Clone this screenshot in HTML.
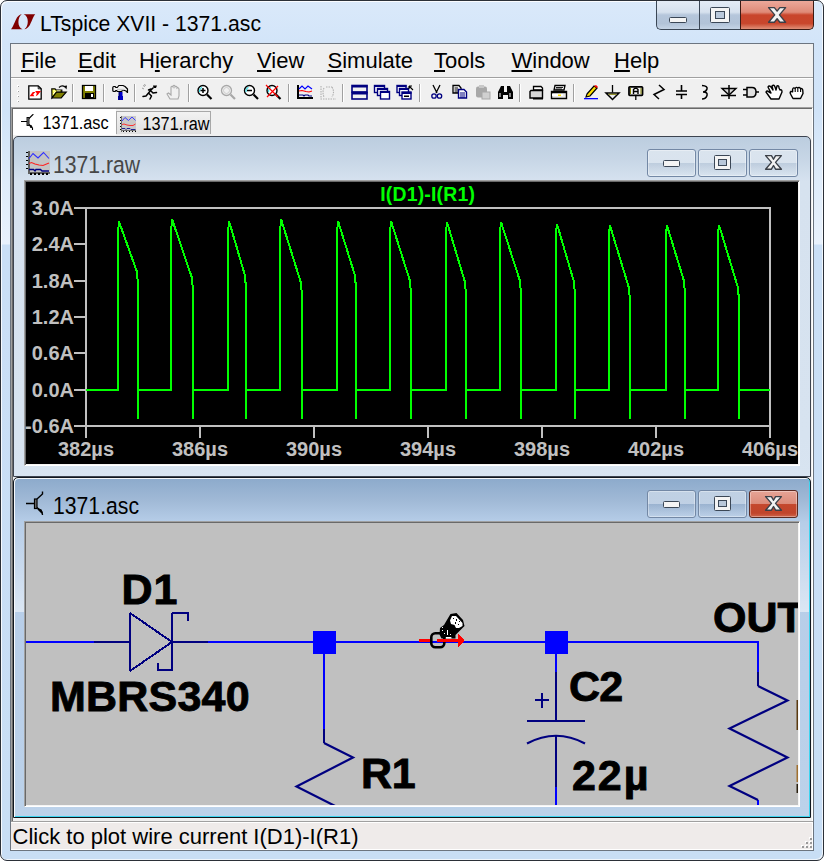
<!DOCTYPE html>
<html><head><meta charset="utf-8">
<style>
*{box-sizing:border-box;margin:0;padding:0}
html,body{width:824px;height:861px;overflow:hidden;background:#fff;font-family:"Liberation Sans",sans-serif}
.a{position:absolute}
#win{left:0;top:0;width:824px;height:861px;border:1px solid #2b3038;border-radius:7px;
 background:linear-gradient(180deg,#dae9fa 0px,#d3e5f9 40px,#d0e3f8 110px,#dfecfa 180px,#e8f1fc 243px,#cadff6 244px,#c8def5 861px);
 box-shadow:inset 1px 1px 0 rgba(255,255,255,.85),inset -1px -1px 0 rgba(255,255,255,.7)}
#ttl{left:40px;top:12px;font-size:21.2px;color:#000;white-space:nowrap;letter-spacing:0px}
.cb{top:1px;height:29px;border:1px solid #3b4756;border-top:none}
#client{left:10px;top:43px;width:804px;height:808px;border:1px solid #6c7580;background:#f0f0f0}
.menu{top:48px;font-size:22px;color:#000;white-space:nowrap}
.menu u{text-decoration:underline;text-underline-offset:2px;text-decoration-thickness:1.5px}
.sep{top:84px;width:1px;height:18px;background:#a0a0a0;box-shadow:1px 0 0 #fff}
.ico{top:84px;width:18px;height:18px}
.tabt{font-size:16.3px;transform:scaleY(1.08);transform-origin:0 50%;white-space:nowrap;color:#000}
.child{left:13px;width:798px;border:1px solid #3d4450;border-radius:5px 5px 0 0}
.cbtn{width:49px;height:28px;border:1px solid #7388a5;border-radius:3px;box-shadow:inset 0 0 0 1px rgba(255,255,255,.35);background:linear-gradient(180deg,rgba(255,255,255,.4),rgba(255,255,255,.3) 50%,rgba(0,20,60,.06) 51%,rgba(255,255,255,.15))}
.ctitle{font-size:21.2px;white-space:nowrap;color:#474747;transform:scaleY(1.13);transform-origin:0 50%}
</style></head><body>
<div id="win" class="a"></div>

<!-- logo -->
<svg class="a" style="left:0;top:0" width="40" height="40">
 <path d="M11,29.3 C13,27 15,21 17,17.5 C18.5,15.5 20,14.5 21.8,14.2 C19.8,15.3 18.4,18.5 18.4,22 C18.4,25.5 19.8,28.3 22.6,29.3 Z" fill="#800000"/>
 <path d="M35.2,14.2 C33.2,16.5 31.2,22.5 29.2,26 C27.7,28 26.2,29 24.4,29.3 C26.4,28.2 27.8,25 27.8,21.5 C27.8,18 26.4,15.2 23.6,14.2 Z" fill="#800000"/>
</svg>
<div id="ttl" class="a">LTspice XVII - 1371.asc</div>

<!-- caption buttons -->
<div class="a cb" style="left:656px;width:44px;border-radius:0 0 0 5px;border-right:none;background:linear-gradient(180deg,#e4ecf6 0,#d6e1ee 40%,#b5c6db 50%,#b2c3d8 80%,#c5d4e6 100%)"></div>
<div class="a cb" style="left:699px;width:42px;border-left:1px solid #3b4756;border-right:none;background:linear-gradient(180deg,#e4ecf6 0,#d6e1ee 40%,#b5c6db 50%,#b2c3d8 80%,#c5d4e6 100%)"></div>
<div class="a cb" style="left:740px;width:74px;border-radius:0 0 5px 0;border-color:#3a1a14;background:linear-gradient(180deg,#eca89a 0,#df8a78 40%,#c9452c 50%,#c8462c 80%,#e09078 100%)"></div>
<!--CAPGLYPHS-->

<div id="client" class="a"></div>

<!-- menu -->
<div class="a menu" style="left:21px"><u>F</u>ile</div>
<div class="a menu" style="left:78px"><u>E</u>dit</div>
<div class="a menu" style="left:139px">H<u>i</u>erarchy</div>
<div class="a menu" style="left:257px"><u>V</u>iew</div>
<div class="a menu" style="left:327.5px"><u>S</u>imulate</div>
<div class="a menu" style="left:434px"><u>T</u>ools</div>
<div class="a menu" style="left:511.5px"><u>W</u>indow</div>
<div class="a menu" style="left:614px"><u>H</u>elp</div>
<div class="a" style="left:11px;top:77px;width:802px;height:1px;background:#a0a0a0"></div>
<div class="a" style="left:11px;top:78px;width:802px;height:1px;background:#fff"></div>
<div class="a" style="left:11px;top:107px;width:802px;height:714px;background:#f0f0f0;border-top:1px solid #a0a0a0;border-left:1px solid #a0a0a0;border-right:1px solid #fff;box-shadow:inset 1px 1px 0 #696969"></div>

<!-- TOOLBAR -->
<!--TB-->

<!-- tabs -->
<div class="a" style="left:13px;top:109px;width:103px;height:26px;background:#fff"></div>
<div class="a" style="left:116px;top:111px;width:95px;height:23px;border:1px solid #a8a8a8;border-bottom:none;background:linear-gradient(180deg,#f2f2f2,#e0e0e0)"></div>
<div class="a tabt" style="left:42.5px;top:114px">1371.asc</div>
<div class="a tabt" style="left:142.5px;top:115px">1371.raw</div>

<!-- child 1 -->
<div class="a child" style="top:136px;height:341px;background:linear-gradient(180deg,#bccddf 0,#c7d6e6 22px,#d6e2ef 44px,#d7e3f0 300px,#d8e4f1 342px)"></div>
<div class="a ctitle" style="left:53px;top:152.5px">1371.raw</div>
<div class="a cbtn" style="left:647px;top:149px"></div>
<div class="a cbtn" style="left:698px;top:149px"></div>
<div class="a cbtn" style="left:749px;top:149px"></div>
<div id="plot" class="a" style="left:24px;top:180px;width:776px;height:286px;background:#000;border-top:1px solid #a0a0a0;border-left:1px solid #a0a0a0;border-right:1px solid #fff;border-bottom:1px solid #fff;box-shadow:inset 1px 1px 0 #696969,inset -1px -1px 0 #f4f4f4"></div>

<!-- PLOT -->
<svg class="a" style="left:0;top:0" width="824" height="861">
<g stroke="#c0c0c0" stroke-width="2" fill="none" shape-rendering="crispEdges">
<rect x="86" y="208" width="684" height="218"/>
<line x1="74" y1="208.0" x2="86" y2="208.0"/><line x1="74" y1="244.3" x2="86" y2="244.3"/><line x1="74" y1="280.7" x2="86" y2="280.7"/><line x1="74" y1="317.0" x2="86" y2="317.0"/><line x1="74" y1="353.3" x2="86" y2="353.3"/><line x1="74" y1="389.7" x2="86" y2="389.7"/><line x1="74" y1="426.0" x2="86" y2="426.0"/><line x1="86" y1="426" x2="86" y2="438"/><line x1="200" y1="426" x2="200" y2="438"/><line x1="314" y1="426" x2="314" y2="438"/><line x1="428" y1="426" x2="428" y2="438"/><line x1="542" y1="426" x2="542" y2="438"/><line x1="656" y1="426" x2="656" y2="438"/><line x1="770" y1="426" x2="770" y2="438"/>
</g>
<g fill="#c0c0c0" font-family="Liberation Sans" font-weight="bold" font-size="20px">
<text x="74" y="215.0" text-anchor="end">3.0A</text><text x="74" y="251.3" text-anchor="end">2.4A</text><text x="74" y="287.7" text-anchor="end">1.8A</text><text x="74" y="324.0" text-anchor="end">1.2A</text><text x="74" y="360.3" text-anchor="end">0.6A</text><text x="74" y="396.7" text-anchor="end">0.0A</text><text x="74" y="433.0" text-anchor="end">-0.6A</text><text x="86" y="456" text-anchor="middle">382µs</text><text x="200" y="456" text-anchor="middle">386µs</text><text x="314" y="456" text-anchor="middle">390µs</text><text x="428" y="456" text-anchor="middle">394µs</text><text x="542" y="456" text-anchor="middle">398µs</text><text x="656" y="456" text-anchor="middle">402µs</text><text x="770" y="456" text-anchor="middle">406µs</text>
</g>
<text x="427.7" y="201" text-anchor="middle" fill="#00ff00" font-family="Liberation Sans" font-weight="bold" font-size="19.4px" letter-spacing="0.2">I(D1)-I(R1)</text>
<path d="M86,390 L118,390 L118,233 L119,221.5 L137,272 L137,278 L138,280 L138,419 L138,390 L171,390 L171,233 L172,219 L192,278 L192,284 L193,286 L193,419 L193,390 L228,390 L228,233 L229,221 L245,275.6 L245,281.6 L246,283.6 L246,419 L246,390 L280,390 L280,233 L281,219 L301,283 L301,289 L302,291 L302,419 L302,390 L337,390 L337,233 L338,221 L355,275.6 L355,281.6 L356,283.6 L356,419 L356,390 L390,390 L390,233 L391,221 L410,281 L410,287 L411,289 L411,419 L411,390 L446,390 L446,233 L447,222 L465,282 L465,288 L466,290 L466,419 L466,390 L500,390 L500,233 L501,222 L520,281 L520,287 L521,289 L521,419 L521,390 L556,390 L556,233 L557,224 L574,282 L574,288 L575,290 L575,419 L575,390 L609,390 L609,233 L610,225.6 L629,288 L629,294 L630,296 L630,419 L630,390 L666,390 L666,233 L667,225.6 L684,281 L684,287 L685,289 L685,419 L685,390 L718,390 L718,233 L719,225 L738,287.6 L738,293.6 L739,295.6 L739,419 L739,390 L770,390" stroke="#00ff00" stroke-width="2" fill="none" stroke-linejoin="miter" shape-rendering="crispEdges"/>
</svg>
<!-- child 2 -->
<div class="a child" style="top:477px;height:341px;background:linear-gradient(180deg,#8caacb 0,#a0b9d6 22px,#b6cde8 44px,#b9cfe9 200px,#bcd2ea 340px);border-color:#10161e;box-shadow:inset 1px 1px 0 rgba(255,255,255,.9),inset 0 -1px 0 #3cd4f0,inset -1px 0 0 #3cd4f0"></div>
<div class="a" style="left:15px;top:521px;width:9px;height:91px;background:linear-gradient(180deg,rgba(255,255,255,0) 0,rgba(255,255,255,.25) 50%,rgba(255,255,255,.5) 100%)"></div>
<div class="a" style="left:800px;top:521px;width:9px;height:91px;background:linear-gradient(180deg,rgba(255,255,255,0) 0,rgba(255,255,255,.25) 50%,rgba(255,255,255,.5) 100%)"></div>
<div class="a ctitle" style="left:53px;top:493.5px;color:#000">1371.asc</div>
<div class="a cbtn" style="left:647px;top:490px"></div>
<div class="a cbtn" style="left:698px;top:490px"></div>
<div class="a cbtn" style="left:749px;top:490px;border-color:#5a2a22;background:linear-gradient(180deg,#e6a496 0,#dc8c7b 48%,#c4472d 52%,#c0452c 85%,#cf654c 100%)"></div>
<div id="sch" class="a" style="left:24px;top:521px;width:776px;height:286px;background:#c0c0c0;border-top:1px solid #a0a0a0;border-left:1px solid #a0a0a0;border-right:1px solid #fff;border-bottom:1px solid #fff;box-shadow:inset 1px 1px 0 #696969,inset -1px -1px 0 #f4f4f4"></div>

<!-- SCH -->
<svg class="a" style="left:0;top:0" width="824" height="861">
<defs><clipPath id="schc"><rect x="26" y="523" width="772" height="282"/></clipPath></defs>
<g clip-path="url(#schc)">
<g fill="none" stroke-width="2" shape-rendering="crispEdges">
 <path d="M26,642 H94 M208,642 H758 V672" stroke="#0000ff"/>
 <path d="M324,642 V729 M556,642 V672 M556,787 V806 M758,800 V806" stroke="#0000ff"/>
 <path d="M94,642 H130 M173,642 H208" stroke="#000080"/>
 <path d="M130,613 V671 M172,613 V671 M130,613 L172,642 L130,671 M172,613 H188 V621 M172,670 H158 V663" stroke="#000080"/>
 <path d="M324,729 V743 M758,672 V686 M556,672 V721 M527,721 H585 M556,736 V787 M542,693 V708 M535,700 H549" stroke="#000080"/>
</g>
<g fill="none" stroke="#000080" stroke-width="2.2">
 <path d="M324,743 L353,757.5 L296.5,786.5 L353,815"/>
 <path d="M758,686 L787.5,700.5 L729.5,728.5 L787.5,757.5 L729.5,786 L758,800"/>
 <path d="M527,743.5 Q556,728 585,743.5"/>
</g>
<g fill="#0000ff" shape-rendering="crispEdges">
 <rect x="313" y="631" width="23" height="23"/>
 <rect x="545" y="631" width="23" height="23"/>
</g>
<g fill="#000" stroke="#000" stroke-width="0.9" font-family="Liberation Sans" font-weight="bold" font-size="43px">
 <text x="121.5" y="603.5" letter-spacing="1">D1</text>
 <text x="50" y="711.3" letter-spacing="0.2">MBRS340</text>
 <text x="361" y="787.5" letter-spacing="-0.4">R1</text>
 <text x="569" y="700.8" letter-spacing="-0.8">C2</text>
 <text x="572" y="790" letter-spacing="1.9">22µ</text>
 <text x="713" y="632" letter-spacing="0">OUT</text>
</g>
<rect x="796.5" y="700" width="1.5" height="30" fill="#5a3a10"/>
<rect x="796.5" y="765" width="1.5" height="17" fill="#a07030"/><rect x="796.5" y="784" width="1.5" height="9" fill="#2a2010"/>
<!-- probe cursor -->
<rect x="431.3" y="633.3" width="13" height="14" rx="4" fill="none" stroke="#000" stroke-width="2.6"/>
<g shape-rendering="crispEdges">
 <rect x="419" y="639" width="11" height="3" fill="#ff0000"/>
 <rect x="437" y="639" width="22" height="3" fill="#ff0000"/>
 <path d="M458,634 L459,634 L464,639.5 L464,641.5 L459,647 L458,647 Z" fill="#ff0000"/>
</g>
<path d="M439.5,634.5 L440,628 L444,625 L447.5,619 L450.5,614 L456.5,613 L463,620 L464.5,626 L459.5,631 L455.5,635 L455.5,638.5 L451.5,638.5 L451.5,637 L445.5,637 L445.5,638.5 L441.5,638.5 Z" fill="#000"/>
<path d="M450,620.5 L452,616 L456,616 L462.5,623 L462.5,626 L459,628 L456,628 L454.5,625 L451,624 Z" fill="#fff"/>
<g fill="#000" shape-rendering="crispEdges">
 <rect x="453" y="618" width="1" height="1"/><rect x="456" y="619" width="1" height="2"/><rect x="455" y="622" width="1" height="2"/><rect x="459" y="621" width="1" height="1"/><rect x="458" y="624" width="1" height="1"/>
</g>
<g fill="#fff" shape-rendering="crispEdges">
 <rect x="442" y="627" width="1" height="1"/><rect x="442" y="630" width="1" height="1"/><rect x="444" y="633" width="1" height="1"/><rect x="447" y="630" width="1" height="5"/><rect x="450" y="634" width="1" height="1"/><rect x="446" y="637" width="5" height="1"/>
</g>
</g>
</svg>
<svg class="a" style="left:0;top:0" width="824" height="861"><rect x="669.5" y="17.5" width="17" height="5" rx="1" fill="#f4f4f4" stroke="#3b4756" stroke-width="1"/><rect x="710.5" y="7.5" width="19" height="15" rx="1" fill="#f4f4f4" stroke="#3b4756" stroke-width="1"/><rect x="715.5" y="11.5" width="9" height="7" fill="#b9c8da" stroke="#3b4756" stroke-width="1"/><path d="M768.60,7.60 L774.38,7.60 L777.10,11.10 L779.82,7.60 L785.60,7.60 L779.48,14.90 L785.60,22.20 L779.82,22.20 L777.10,18.70 L774.38,22.20 L768.60,22.20 L774.72,14.90 Z" fill="#f2f2f2" stroke="#3b4048" stroke-width="1.4" stroke-linejoin="round"/><rect x="663.5" y="160.5" width="16" height="6" rx="1" fill="#f4f4f4" stroke="#3b4756" stroke-width="1"/><rect x="714.5" y="155.5" width="16" height="14" rx="1" fill="#f4f4f4" stroke="#3b4756" stroke-width="1"/><rect x="718.5" y="159.5" width="8" height="6" fill="#b9c8da" stroke="#3b4756" stroke-width="1"/><path d="M765.60,155.60 L771.45,155.60 L773.50,159.27 L775.55,155.60 L781.40,155.60 L775.55,162.40 L781.40,169.20 L775.55,169.20 L773.50,165.53 L771.45,169.20 L765.60,169.20 L771.45,162.40 Z" fill="#f2f2f2" stroke="#3b4048" stroke-width="1.4" stroke-linejoin="round"/><rect x="663.5" y="501.5" width="16" height="6" rx="1" fill="#f4f4f4" stroke="#3b4756" stroke-width="1"/><rect x="714.5" y="496.5" width="16" height="14" rx="1" fill="#f4f4f4" stroke="#3b4756" stroke-width="1"/><rect x="718.5" y="500.5" width="8" height="6" fill="#b9c8da" stroke="#3b4756" stroke-width="1"/><path d="M765.60,496.60 L771.45,496.60 L773.50,500.27 L775.55,496.60 L781.40,496.60 L775.55,503.40 L781.40,510.20 L775.55,510.20 L773.50,506.53 L771.45,510.20 L765.60,510.20 L771.45,503.40 Z" fill="#f2f2f2" stroke="#3b4048" stroke-width="1.4" stroke-linejoin="round"/></svg>
<!-- status bar -->

<div class="a" style="left:11px;top:821px;width:802px;height:29px;background:#efebea;border-top:1px solid #a0a0a0;box-shadow:inset 0 1px 0 #fff,inset -1px -1px 0 #fff"></div>
<div class="a" style="left:12.5px;top:824px;font-size:22px;white-space:nowrap;color:#000">Click to plot wire current I(D1)-I(R1)</div>

<svg class="a" style="left:0;top:0" width="824" height="861">
<!-- grip -->
<g shape-rendering="crispEdges">
 <rect x="17" y="85" width="2" height="2" fill="#fff"/><rect x="18" y="86" width="1" height="1" fill="#a0a0a0"/>
 <rect x="17" y="90" width="2" height="2" fill="#fff"/><rect x="18" y="91" width="1" height="1" fill="#a0a0a0"/>
 <rect x="17" y="95" width="2" height="2" fill="#fff"/><rect x="18" y="96" width="1" height="1" fill="#a0a0a0"/>
 <rect x="17" y="100" width="2" height="2" fill="#fff"/><rect x="18" y="101" width="1" height="1" fill="#a0a0a0"/>
</g>
<!-- separators -->
<g shape-rendering="crispEdges">
 <rect x="72" y="84" width="1" height="18" fill="#a0a0a0"/><rect x="73" y="84" width="1" height="18" fill="#fff"/>
 <rect x="103" y="84" width="1" height="18" fill="#a0a0a0"/><rect x="104" y="84" width="1" height="18" fill="#fff"/>
 <rect x="134" y="84" width="1" height="18" fill="#a0a0a0"/><rect x="135" y="84" width="1" height="18" fill="#fff"/>
 <rect x="188" y="84" width="1" height="18" fill="#a0a0a0"/><rect x="189" y="84" width="1" height="18" fill="#fff"/>
 <rect x="288" y="84" width="1" height="18" fill="#a0a0a0"/><rect x="289" y="84" width="1" height="18" fill="#fff"/>
 <rect x="342" y="84" width="1" height="18" fill="#a0a0a0"/><rect x="343" y="84" width="1" height="18" fill="#fff"/>
 <rect x="419" y="84" width="1" height="18" fill="#a0a0a0"/><rect x="420" y="84" width="1" height="18" fill="#fff"/>
 <rect x="519" y="84" width="1" height="18" fill="#a0a0a0"/><rect x="520" y="84" width="1" height="18" fill="#fff"/>
 <rect x="573" y="84" width="1" height="18" fill="#a0a0a0"/><rect x="574" y="84" width="1" height="18" fill="#fff"/>
</g>
<!-- new doc -->
<path d="M28.8,85.8 H38.2 L41.2,88.8 V99.2 H28.8 Z" fill="#fff" stroke="#000" stroke-width="1.3"/>
<path d="M38.2,86 V88.8 H41" fill="none" stroke="#000" stroke-width="0.9"/>
<path d="M29.5,96.2 L32.8,92 H35.5 L33.2,94.3 L34.3,96.2 Z" fill="#ff0000"/>
<path d="M35.2,91 H41 L37.8,95 L35.8,96.2 L36.8,93.6 Z" fill="#ff0000"/>
<!-- open folder -->
<path d="M51.8,88.8 H55 L56,90 H61.8 V92.2 H57 L52,98 Z" fill="#ffff40" stroke="#000" stroke-width="1.2"/>
<path d="M53.5,91 L55,90.8 M53,94 L55.5,91.5 M57,91 H60" stroke="#fff" stroke-width="0.9"/>
<path d="M52,98 L56.5,92.2 H66.2 L61.2,98 Z" fill="#808000" stroke="#000" stroke-width="1.2"/>
<path d="M59,87.5 Q62,84.5 65,87" fill="none" stroke="#000" stroke-width="1.2"/><path d="M63.8,86 L66.5,89.5 L67,85.5 Z" fill="#000"/>
<!-- save -->
<rect x="82.5" y="85.5" width="13" height="13" fill="#808000" stroke="#000" stroke-width="1.3"/>
<rect x="85" y="86" width="8" height="5" fill="#fff"/>
<rect x="85" y="93" width="9" height="5" fill="#000"/>
<rect x="91" y="94" width="2" height="3" fill="#fff"/>
<!-- hammer -->
<path d="M112.8,87.5 Q113,86.5 114,86.5 H115 L116,87.5 H117.3 L118.8,85.5 H123 L125,86.5 L127.5,89 V92.5 L126,91 L124,90.3 H122.5 L121.5,91.5 H117.5 L116.5,90.5 H116 L115,91.5 H114 Q112.8,91.5 112.8,90.5 Z" fill="#f0f0f0" stroke="#000" stroke-width="1.2" stroke-linejoin="round"/>
<rect x="117" y="88.8" width="7" height="1.5" fill="#c8c8c8"/>
<rect x="119" y="92" width="3.5" height="4" fill="#0000c8"/>
<rect x="118" y="96" width="5" height="4" fill="#0000c8"/>
<rect x="118.5" y="92" width="1.5" height="8" fill="#000080"/>
<!-- runner -->
<g fill="none" stroke="#000" stroke-width="1.5" stroke-linecap="round" stroke-linejoin="round">
 <path d="M143,96.5 L146,96 L151,90 L153,88 M148.5,90 L151,89 M151.5,91.5 L153,93 L156.5,92.5 M149,93.5 L151.5,96 L150,99"/>
</g>
<path d="M153,85.5 H157 L156,88 H153.5 Z" fill="#000"/>
<path d="M143,85.5 L145,86.5 M142,88 L144,89 M144,84.5 L146,85.5" stroke="#a0a0a0" stroke-width="1"/>
<!-- grey hand -->
<path d="M170,99 L167,94 L168.5,93 L171,95 V87 Q172,85.5 173,87 V86 Q174,84.5 175,86 V87 Q176,85.5 177,87 V88 Q178,87 179,89 V96 L178,99 Z" fill="none" stroke="#a8a8a8" stroke-width="1.1"/>
<!-- zoom in -->
<g>
 <circle cx="203" cy="90.5" r="5" fill="#fff" stroke="#000" stroke-width="1.4"/>
 <path d="M199.5,92 Q199.5,88 202,87.3" stroke="#40e0e8" stroke-width="1.2" fill="none"/>
 <path d="M200.5,90.5 H205.5 M203,88 V93" stroke="#000" stroke-width="1.5"/>
 <path d="M207,94.5 L211.5,99" stroke="#000" stroke-width="2.2"/>
 <circle cx="226.5" cy="90.5" r="5" fill="none" stroke="#a8a8a8" stroke-width="1.3"/>
 <circle cx="226.5" cy="90.5" r="3" fill="none" stroke="#c8c8c8" stroke-width="0.9"/>
 <path d="M230.5,94.5 L235,99" stroke="#a8a8a8" stroke-width="2.2"/>
 <circle cx="249.5" cy="90.5" r="5" fill="#fff" stroke="#000" stroke-width="1.4"/>
 <path d="M246,92 Q246,88 248.5,87.3" stroke="#40e0e8" stroke-width="1.2" fill="none"/>
 <path d="M247,90.5 H252" stroke="#000" stroke-width="1.5"/>
 <path d="M253.5,94.5 L258,99" stroke="#000" stroke-width="2.2"/>
 <circle cx="272" cy="90.5" r="5" fill="#fff" stroke="#000" stroke-width="1.4"/>
 <path d="M268.5,92 Q268.5,88 271,87.3" stroke="#40e0e8" stroke-width="1.2" fill="none"/>
 <path d="M276,94.5 L280.5,99" stroke="#000" stroke-width="2.2"/>
 <path d="M266,85 L278,97 M278,86 L267,97" stroke="#ff0000" stroke-width="1.2"/>
</g>
<!-- waveform -->
<g shape-rendering="crispEdges">
 <rect x="297" y="85" width="2" height="14" fill="#000"/><rect x="297" y="97" width="16" height="2" fill="#000"/>
</g>
<path d="M299,89 L302,86 L305,89 L308,86 L312,89" fill="none" stroke="#0000ff" stroke-width="1.2"/>
<path d="M299,91 L302,90.5 L306,91.5 L309,92 L312,91" fill="none" stroke="#ff0000" stroke-width="1.2"/>
<path d="M299,95 H303 L304,96 L305,95 H308 L309,96 H312" fill="none" stroke="#000080" stroke-width="1.2"/>
<path d="M321,86 V99 H336 M324,88 Q322,92 324,97 M332,87 Q335,92 332,97 M326,87 H332" fill="none" stroke="#b0b0b0" stroke-width="1.1" stroke-dasharray="1.5,1"/>
<!-- tile -->
<g fill="none" stroke="#000080" stroke-width="1.6">
 <rect x="352" y="85.5" width="15" height="6.5"/><rect x="352" y="92.5" width="15" height="6.5"/>
</g>
<rect x="352" y="85" width="15.5" height="2.5" fill="#000080"/><rect x="352" y="92" width="15.5" height="2.5" fill="#000080"/>
<!-- cascade -->
<g fill="#fff" stroke="#000080" stroke-width="1.4">
 <rect x="374.5" y="85.5" width="10" height="7"/><rect x="377.5" y="88.5" width="10" height="7"/><rect x="380.5" y="91.5" width="9" height="7.5"/>
</g>
<rect x="374" y="85" width="11" height="2" fill="#000080"/><rect x="377" y="88" width="11" height="2" fill="#000080"/><rect x="380" y="91" width="10" height="2" fill="#000080"/>
<!-- arrange -->
<g fill="#fff" stroke="#000080" stroke-width="1.4">
 <rect x="397" y="85.5" width="9" height="7"/><rect x="399.5" y="88.5" width="9" height="7"/><rect x="402" y="92" width="9" height="7"/>
</g>
<rect x="397" y="85" width="9.5" height="2" fill="#000080"/><rect x="399" y="88" width="10" height="2" fill="#000080"/><rect x="402" y="92" width="9.5" height="2" fill="#000080"/>
<rect x="404" y="95.5" width="5" height="1.5" fill="#000"/>
<path d="M409,86 L413,90 M409,86 H412 M409,86 V89" stroke="#000" stroke-width="1.1" fill="none"/>
<!-- scissors -->
<path d="M433,85 L437,93 M440,85 L436,93" stroke="#000" stroke-width="1.3"/>
<circle cx="434" cy="96" r="2.2" fill="none" stroke="#000080" stroke-width="1.3"/>
<circle cx="439.5" cy="96" r="2.2" fill="none" stroke="#000080" stroke-width="1.3"/>
<!-- copy -->
<path d="M453,85.5 H459 L461,88 V93 H453 Z" fill="#fff" stroke="#000" stroke-width="1.3"/>
<path d="M454.5,88 H458 M454.5,90 H459 M454.5,92 H459" stroke="#000" stroke-width="1"/>
<path d="M458.5,89.5 H464 L466.5,92 V98 H458.5 Z" fill="#fff" stroke="#000080" stroke-width="1.4"/>
<path d="M460,93 H465 M460,95 H465 M460,97 H465" stroke="#000080" stroke-width="1"/>
<!-- paste grey -->
<rect x="476" y="86.5" width="11" height="11" rx="2" fill="#a8a8a8"/>
<rect x="479" y="85" width="5" height="3" fill="#c8c8c8"/>
<rect x="482" y="92" width="8" height="7" fill="#d0d0d0" stroke="#a8a8a8" stroke-width="1"/>
<!-- binoculars -->
<path d="M498,99 V92 L501,86 H504 V92 H507 V86 H510 L513,92 V99 H508 V95 H503 V99 Z" fill="#000"/>
<rect x="499.5" y="93" width="1" height="4" fill="#fff"/><rect x="509.5" y="93" width="1" height="4" fill="#fff"/>
<!-- print preview -->
<path d="M533.5,86.5 H541 L542.5,88 V90 H533.5 Z" fill="#fff" stroke="#000" stroke-width="1.3"/>
<path d="M530,91.5 L531,90.5 H542.5 V98 H530 Z" fill="#d8d8d8" stroke="#000" stroke-width="1.4"/>
<rect x="533" y="98" width="10" height="1.5" fill="#000"/>
<!-- print -->
<path d="M555,85.5 H565 L564,90 H554 Z" fill="#fff" stroke="#000" stroke-width="1.3"/>
<path d="M556,87.5 H563 M555.5,89 H562" stroke="#000" stroke-width="0.9"/>
<path d="M551.5,91.5 H566.5 V98.5 H551.5 Z" fill="#e8e8e8" stroke="#000" stroke-width="1.4"/>
<rect x="552" y="94" width="11" height="2" fill="#fff"/><rect x="558" y="94.5" width="3" height="1.5" fill="#ffe000"/>
<rect x="552" y="92" width="14" height="1.2" fill="#000"/>
<!-- pencil -->
<path d="M587,94 L594,86 L597,88 L590,96 L586,97 Z" fill="#ffe000" stroke="#000" stroke-width="1.2"/>
<path d="M594,86 L596,85 L598,87 L597,88 Z" fill="#ff0000"/>
<rect x="584" y="98" width="14" height="1.3" fill="#0000ff"/>
<!-- ground -->
<path d="M612.5,85 V92.5" stroke="#000" stroke-width="1.3"/>
<path d="M606,93 H619 L612.5,99.5 Z" fill="#ececf2" stroke="#000" stroke-width="1.5" stroke-linejoin="miter"/>
<path d="M608.5,94.3 H616.5" stroke="#808000" stroke-width="1"/>
<!-- label -->
<rect x="629" y="86.8" width="13.5" height="8.5" rx="0.8" fill="#f4f4f4" stroke="#000" stroke-width="1.8"/>
<path d="M630.5,88 V94 M641,88 V94" stroke="#808000" stroke-width="1"/>
<path d="M633.5,94 V89.5 L635,88.2 H636.5 L638,89.5 V94 M633.5,91.5 H638" stroke="#000" stroke-width="1.4" fill="none"/>
<path d="M635.8,96 V100" stroke="#000" stroke-width="1.3"/>
<!-- resistor -->
<path d="M659,85 L664,89.5 L654,94.5 L659,99" fill="none" stroke="#000" stroke-width="1.5"/>
<!-- cap -->
<path d="M681.5,85 V91 M681.5,95 V99 M676,91 H687 M676,94.5 H687" stroke="#000" stroke-width="1.6"/>
<!-- inductor -->
<path d="M702,85.5 Q708,86 707,89 Q706,92 703,92 Q708,92 707,95.5 Q706,99 702,99" fill="none" stroke="#000" stroke-width="1.5"/>
<!-- diode -->
<path d="M722,88.5 H736 L729,95 Z" fill="#d8d8d8" stroke="#000" stroke-width="1.4"/>
<path d="M729,85 V99 M721,95.5 H736" stroke="#000" stroke-width="1.5"/>
<!-- component -->
<path d="M747,87.5 H752 Q756,87.5 756,92 Q756,97 752,97 H747 Z" fill="#e0e0e0" stroke="#000" stroke-width="1.5"/>
<path d="M743,89.5 H747 M743,95 H747 M756,92 H759" stroke="#000" stroke-width="1.3"/>
<!-- hand open -->
<path d="M771,99 L766,92 Q767,90 769,92 L771,93 L768,87 Q769,85 771,87 L773,90 L772,86 Q774,84 775,87 L776,90 L777,86 Q779,85 779,88 L780,90 Q782,89 782,92 L779,99 Z" fill="#fff" stroke="#000" stroke-width="1.4" stroke-linejoin="round"/>
<!-- hand grab -->
<path d="M793,98.5 L790.8,94.5 Q789.5,92.3 791,91.3 L792.6,91.8 L792.6,89.2 Q793.6,87 795.2,88.5 Q796.2,86.6 797.8,88 Q799.2,86.6 800.6,88.6 Q802.8,88.3 802.8,90.8 L803,93.5 L800.5,98.5 Z" fill="#fff" stroke="#000" stroke-width="1.4" stroke-linejoin="round"/>
<path d="M795.2,88.8 V92 M797.8,88.3 V92 M800.6,88.8 V92" stroke="#000" stroke-width="1.1"/>
<!-- tab icons -->
<path d="M21,121.5 H27.5 M29,118.5 L33,114.5 V114 M29,124.5 L32.5,128 V130" stroke="#000" stroke-width="1.1" fill="none"/>
<rect x="27" y="117.5" width="2" height="8" fill="#808080" stroke="#000" stroke-width="0.9"/>
<path d="M29.5,125 L32,126 L31,128 Z" fill="#000" stroke="#000" stroke-width="0.8"/>
<g shape-rendering="crispEdges">
 <rect x="121" y="116" width="15" height="15" fill="#c8c8c8"/>
 <rect x="121" y="116" width="1" height="16" fill="#707070"/><rect x="121" y="130" width="15" height="1" fill="#707070"/>
 <rect x="120" y="117" width="1" height="1" fill="#000"/><rect x="120" y="120" width="1" height="1" fill="#000"/><rect x="120" y="123" width="1" height="1" fill="#000"/><rect x="120" y="126" width="1" height="1" fill="#000"/><rect x="120" y="129" width="1" height="1" fill="#000"/><rect x="123" y="131" width="1" height="1" fill="#000"/><rect x="126" y="131" width="1" height="1" fill="#000"/><rect x="129" y="131" width="1" height="1" fill="#000"/><rect x="132" y="131" width="1" height="1" fill="#000"/><rect x="135" y="131" width="1" height="1" fill="#000"/>
</g>
<path d="M122,121 L125,117.5 L128.5,120.5 L132,117 L135.5,120.5" fill="none" stroke="#4040ff" stroke-width="1"/>
<path d="M122,124.5 L124,124 L127,125 L130,125.5 L133,125.5 L135.5,124" fill="none" stroke="#ff3030" stroke-width="1"/>
<path d="M122,128.5 H125 L126,129.5 L127,128.5 H130 L131,129.5 H135.5" fill="none" stroke="#202090" stroke-width="1"/>
<!-- child1 icon -->
<g shape-rendering="crispEdges">
 <rect x="28" y="151" width="22" height="22" fill="#c4c4c4"/>
 <rect x="28" y="151" width="1.5" height="23" fill="#606060"/><rect x="28" y="172" width="22" height="1.5" fill="#606060"/>
 <rect x="26" y="151.5" width="2" height="1.5" fill="#000"/><rect x="26" y="155.5" width="2" height="1.5" fill="#000"/><rect x="26" y="159.5" width="2" height="1.5" fill="#000"/><rect x="26" y="163.5" width="2" height="1.5" fill="#000"/><rect x="26" y="167.5" width="2" height="1.5" fill="#000"/><rect x="30" y="173" width="1.5" height="2" fill="#000"/><rect x="34" y="173" width="1.5" height="2" fill="#000"/><rect x="38" y="173" width="1.5" height="2" fill="#000"/><rect x="42" y="173" width="1.5" height="2" fill="#000"/><rect x="46" y="173" width="1.5" height="2" fill="#000"/>
</g>
<path d="M29,158.5 L33,153.5 L38,158 L43.5,152.5 L49,158.5" fill="none" stroke="#3030ff" stroke-width="1.1"/>
<path d="M29,163.5 L31.5,162.5 L35,164 L39,165 L43,165.5 L49,163" fill="none" stroke="#ff2020" stroke-width="1.1"/>
<path d="M29,169.5 H33.5 L35,171 L36,169.5 H40.5 L42,171 H49" fill="none" stroke="#000080" stroke-width="1.4"/>
<!-- child2 icon -->
<path d="M26,503.5 H34 M37,499 L42.5,494 V491.5 M37,507.5 L42,512 L42.5,515" stroke="#000" stroke-width="1.4" fill="none"/>
<rect x="34.5" y="499" width="2.5" height="9.5" fill="#707070" stroke="#000" stroke-width="1.2"/>
<path d="M38,509 L41,510 L42,513 Z" fill="#000" stroke="#000" stroke-width="1.5"/>
</svg>
<svg class="a" style="left:0;top:0" width="824" height="861"><g shape-rendering="crispEdges"><rect x="809" y="837" width="2" height="2" fill="#fff"/><rect x="810" y="838" width="2" height="2" fill="#9a9a9a"/><rect x="805" y="841" width="2" height="2" fill="#fff"/><rect x="806" y="842" width="2" height="2" fill="#9a9a9a"/><rect x="809" y="841" width="2" height="2" fill="#fff"/><rect x="810" y="842" width="2" height="2" fill="#9a9a9a"/><rect x="801" y="845" width="2" height="2" fill="#fff"/><rect x="802" y="846" width="2" height="2" fill="#9a9a9a"/><rect x="805" y="845" width="2" height="2" fill="#fff"/><rect x="806" y="846" width="2" height="2" fill="#9a9a9a"/><rect x="809" y="845" width="2" height="2" fill="#fff"/><rect x="810" y="846" width="2" height="2" fill="#9a9a9a"/></g></svg>
</body></html>
